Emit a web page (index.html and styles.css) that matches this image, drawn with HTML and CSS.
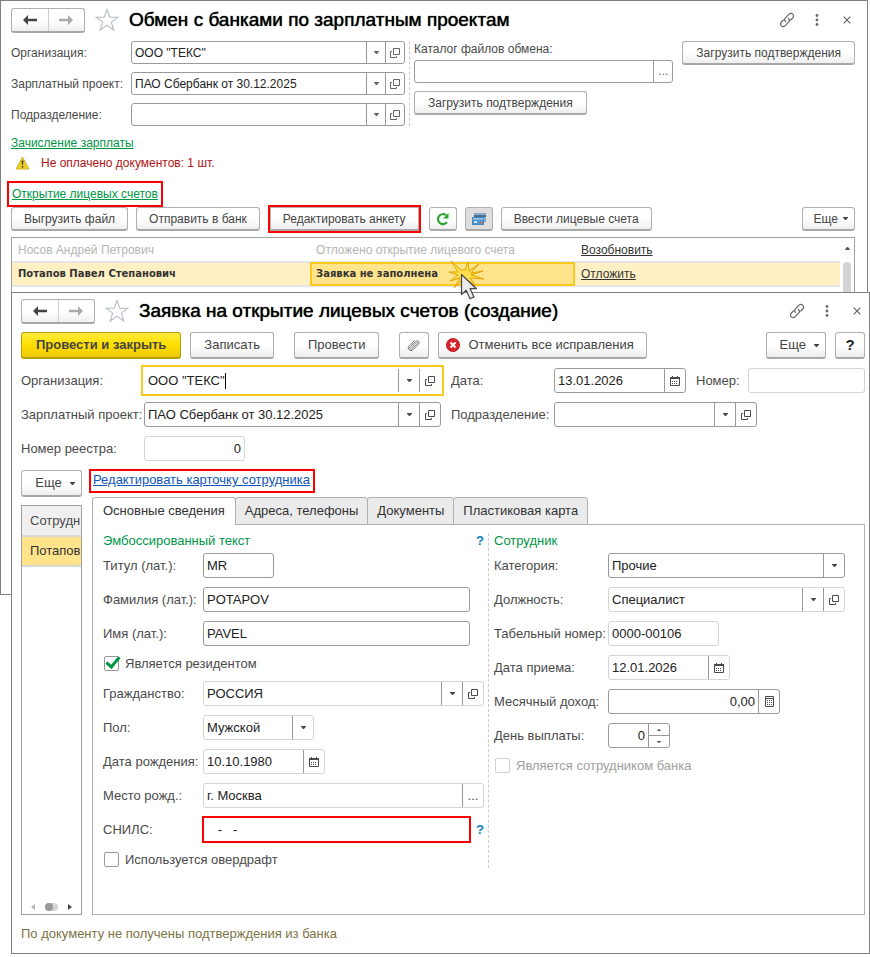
FILE: index.html
```html
<!DOCTYPE html>
<html lang="ru">
<head>
    <meta charset="UTF-8">
    <meta name="viewport" content="width=device-width, initial-scale=1.0">
    <title>Обмен с банками по зарплатным проектам</title>
    <link rel="stylesheet" href="styles.css">
</head>
<body>
    <!-- Общие иконки -->
    <svg class="sprite" width="0" height="0" aria-hidden="true">
        <symbol id="i-back" viewBox="0 0 14 10"><path d="M0 5l5-5v3.800h9v2.400H5V10z" fill="currentColor"/></symbol>
        <symbol id="i-next" viewBox="0 0 14 10"><path d="M14 5L9 0v3.800H0v2.400h9V10z" fill="currentColor"/></symbol>
        <symbol id="i-star" viewBox="0 0 24 24"><path d="M12 1.500l2.700 7.700h8.200l-6.600 4.900 2.500 7.900-6.800-4.900-6.800 4.900 2.500-7.900L1.100 9.200h8.200z" fill="#fff" stroke="#b4bcc4" stroke-width="1.100"/></symbol>
        <symbol id="i-link" viewBox="0 0 16 16"><g fill="none" stroke="#666" stroke-width="1.200" stroke-linecap="round"><path d="M6.500 9.500C5.300 8.200 5.500 6.800 6.500 5.800l3.300-3.500c1.200-1.200 2.800-1.200 3.900-.2s1.100 2.700 0 3.900l-2 2"/><path d="M9.500 6.500c1.200 1.300 1 2.700 0 3.700l-3.300 3.500c-1.200 1.200-2.800 1.200-3.900.2s-1.100-2.700 0-3.900l2-2"/></g></symbol>
        <symbol id="i-dots" viewBox="0 0 4 12"><g fill="#6a6a6a"><circle cx="2" cy="1.500" r="1.400"/><circle cx="2" cy="6" r="1.400"/><circle cx="2" cy="10.500" r="1.400"/></g></symbol>
        <symbol id="i-close" viewBox="0 0 8 8"><path d="M.7.7l6.600 6.600M7.300.7L.7 7.300" stroke="#666" stroke-width="1.200"/></symbol>
        <symbol id="i-down" viewBox="0 0 5 3"><path d="M0 0h5v.5L3 3H2L0 .5z" fill="currentColor"/></symbol>
        <symbol id="i-up" viewBox="0 0 5 3"><path d="M0 3h5v-.5L3 0H2L0 2.500z" fill="currentColor"/></symbol>
        <symbol id="i-open" viewBox="0 0 10 10"><path d="M3.500.5h6v6h-6zM2 3.500H.5v6h6V8" fill="none" stroke="currentColor"/></symbol>
        <symbol id="i-calendar" viewBox="0 0 10 10"><path d="M.5 1.500h9v8h-9z" fill="#fff" stroke="#4a4a4a"/><path d="M0 1h10v2H0zM2 0h1v1H2zM7 0h1v1H7z" fill="#4a4a4a"/><path d="M2 5.500h6M2 7.500h6" stroke="#4a4a4a" stroke-dasharray="1 1"/></symbol>
        <symbol id="i-calc" viewBox="0 0 9 11"><path d="M.5.5h8v10h-8zM1 2.500h7" fill="none" stroke="#4a4a4a"/><path d="M2 4.500h5M2 6.500h5M2 8.500h5" stroke="#4a4a4a" stroke-dasharray="1 1"/></symbol>
    </svg>

    <div class="desktop">
        <!-- Окно обмена с банками -->
        <main class="window window-main">
            <header class="titlebar">
                <div class="nav">
                    <button type="button" aria-label="Назад"><svg width="14" height="10"><use href="#i-back"/></svg></button>
                    <button type="button" class="next" aria-label="Вперед"><svg width="14" height="10"><use href="#i-next"/></svg></button>
                </div>
                <svg class="star" width="24" height="24"><use href="#i-star"/></svg>
                <h1>Обмен с банками по зарплатным проектам</h1>
                <div class="window-tools">
                    <button type="button" aria-label="Ссылка"><svg width="16" height="16"><use href="#i-link"/></svg></button>
                    <button type="button" aria-label="Меню"><svg width="4" height="12"><use href="#i-dots"/></svg></button>
                    <button type="button" aria-label="Закрыть"><svg width="8" height="8"><use href="#i-close"/></svg></button>
                </div>
            </header>

            <section class="params">
                <div class="params-left">
                    <div class="row">
                        <label for="org">Организация:</label>
                        <div class="field">
                            <input id="org" type="text" value='ООО "ТЕКС"'>
                            <button type="button" aria-label="Выбрать"><svg width="5" height="3"><use href="#i-down"/></svg></button>
                            <button type="button" aria-label="Открыть"><svg width="10" height="10"><use href="#i-open"/></svg></button>
                        </div>
                    </div>
                    <div class="row">
                        <label for="project">Зарплатный проект:</label>
                        <div class="field">
                            <input id="project" type="text" value="ПАО Сбербанк от 30.12.2025">
                            <button type="button" aria-label="Выбрать"><svg width="5" height="3"><use href="#i-down"/></svg></button>
                            <button type="button" aria-label="Открыть"><svg width="10" height="10"><use href="#i-open"/></svg></button>
                        </div>
                    </div>
                    <div class="row">
                        <label for="dept">Подразделение:</label>
                        <div class="field">
                            <input id="dept" type="text">
                            <button type="button" aria-label="Выбрать"><svg width="5" height="3"><use href="#i-down"/></svg></button>
                            <button type="button" aria-label="Открыть"><svg width="10" height="10"><use href="#i-open"/></svg></button>
                        </div>
                    </div>
                </div>
                <div class="params-middle">
                    <label for="catalog">Каталог файлов обмена:</label>
                    <div class="field">
                        <input id="catalog" type="text">
                        <button type="button" class="ellipsis" aria-label="Обзор">...</button>
                    </div>
                    <button type="button" class="btn">Загрузить подтверждения</button>
                </div>
                <button type="button" class="btn">Загрузить подтверждения</button>
            </section>

            <section class="tasks">
                <a href="#" class="link-green">Зачисление зарплаты</a>
                <p class="warning">
                    <svg width="15" height="14" viewBox="0 0 15 14"><path d="M7.500 1L14 13H1z" fill="#ecd02c" stroke="#d3b52a" stroke-linejoin="round"/><path d="M6.500 4.500h2L8 9H7zM6.700 10h1.600v1.600H6.700z" fill="#4a3d00"/></svg>
                    Не оплачено документов: 1 шт.
                </p>
                <div class="marked marked-accounts"><a href="#" class="link-green">Открытие лицевых счетов</a></div>
            </section>

            <div class="toolbar">
                <button type="button" class="btn">Выгрузить файл</button>
                <button type="button" class="btn">Отправить в банк</button>
                <button type="button" class="btn btn-marked">Редактировать анкету</button>
                <button type="button" class="btn btn-icon" aria-label="Обновить">
                    <svg width="14" height="14" viewBox="0 0 14 14"><path d="M11 10.200A5 5 0 1 1 10 3.200" fill="none" stroke="#2ba52e" stroke-width="2.200"/><path d="M12.500 1v5.500H7z" fill="#2ba52e"/></svg>
                </button>
                <button type="button" class="btn btn-icon pressed" aria-label="Карты">
                    <svg width="16" height="14" viewBox="0 0 16 14"><path d="M3.500 1.500h11v8h-11z" fill="#8db4d6" stroke="#7ba3c7"/><path d="M3 3h12v2H3z" fill="#4f6c88"/><path d="M1.500 5.500h11v7h-11z" fill="#4b97d2" stroke="#3f85bd"/><path d="M2 6h10v1.500H2z" fill="#9fcbee"/><path d="M3 9h3v2H3z" fill="#d9e6f0"/><path d="M9 10h3v1.500H9z" fill="#d9694a"/></svg>
                </button>
                <button type="button" class="btn">Ввести лицевые счета</button>
                <button type="button" class="btn more">Еще <svg width="5" height="3"><use href="#i-down"/></svg></button>
            </div>

            <div class="list">
                <table>
                    <tbody>
                        <tr class="muted">
                            <td class="col-name">Носов Андрей Петрович</td>
                            <td class="col-status">Отложено открытие лицевого счета</td>
                            <td><a href="#">Возобновить</a></td>
                        </tr>
                        <tr class="selected">
                            <td class="col-name">Потапов Павел Степанович</td>
                            <td class="col-status current">Заявка не заполнена</td>
                            <td><a href="#">Отложить</a></td>
                        </tr>
                    </tbody>
                </table>
                <div class="scrollbar">
                    <svg width="5" height="3"><use href="#i-up"/></svg>
                    <div class="thumb"></div>
                </div>
            </div>
        </main>

        <!-- Окно заявки -->
        <section class="window window-doc">
            <header class="titlebar">
                <div class="nav">
                    <button type="button" aria-label="Назад"><svg width="14" height="10"><use href="#i-back"/></svg></button>
                    <button type="button" class="next" aria-label="Вперед"><svg width="14" height="10"><use href="#i-next"/></svg></button>
                </div>
                <svg class="star" width="24" height="24"><use href="#i-star"/></svg>
                <h1>Заявка на открытие лицевых счетов (создание)</h1>
                <div class="window-tools">
                    <button type="button" aria-label="Ссылка"><svg width="16" height="16"><use href="#i-link"/></svg></button>
                    <button type="button" aria-label="Меню"><svg width="4" height="12"><use href="#i-dots"/></svg></button>
                    <button type="button" aria-label="Закрыть"><svg width="8" height="8"><use href="#i-close"/></svg></button>
                </div>
            </header>

            <div class="commands">
                <button type="button" class="btn btn-primary">Провести и закрыть</button>
                <button type="button" class="btn">Записать</button>
                <button type="button" class="btn spaced">Провести</button>
                <button type="button" class="btn btn-icon spaced" aria-label="Файлы">
                    <svg width="14" height="14" viewBox="0 0 14 14"><path d="M4.500 9.200L9.300 4.400c.9-.9 2 .2 1.100 1.100L5.300 10.600c-1.500 1.500-3.500-.5-2-2L8.500 3.400c2.200-2.200 5.200.7 3 2.900l-5.200 5.200c-3 3-7-1-4-4L7.500 2.300" fill="none" stroke="#777" stroke-linecap="round"/></svg>
                </button>
                <button type="button" class="btn btn-cancel">
                    <svg width="14" height="14" viewBox="0 0 14 14"><circle cx="7" cy="7" r="6.600" fill="#d9232a" stroke="#b5161c" stroke-width=".8"/><path d="M4.500 4.500l5 5M9.500 4.500l-5 5" stroke="#fff" stroke-width="2"/></svg>
                    Отменить все исправления
                </button>
                <button type="button" class="btn more">Еще <svg width="5" height="3"><use href="#i-down"/></svg></button>
                <button type="button" class="btn btn-icon help">?</button>
            </div>

            <div class="head-form">
                <label for="doc-org">Организация:</label>
                <div class="field focused">
                    <span class="typed"><input id="doc-org" type="text" value='ООО "ТЕКС"'><i class="caret"></i></span>
                    <button type="button" aria-label="Выбрать"><svg width="5" height="3"><use href="#i-down"/></svg></button>
                    <button type="button" aria-label="Открыть"><svg width="10" height="10"><use href="#i-open"/></svg></button>
                </div>
                <label for="doc-date">Дата:</label>
                <div class="date-number">
                    <div class="field w-date-wide">
                        <input id="doc-date" type="text" value="13.01.2026">
                        <button type="button" aria-label="Календарь"><svg width="10" height="10"><use href="#i-calendar"/></svg></button>
                    </div>
                    <label for="doc-number">Номер:</label>
                    <div class="field light"><input id="doc-number" type="text" readonly></div>
                </div>

                <label for="doc-project">Зарплатный проект:</label>
                <div class="field">
                    <input id="doc-project" type="text" value="ПАО Сбербанк от 30.12.2025">
                    <button type="button" aria-label="Выбрать"><svg width="5" height="3"><use href="#i-down"/></svg></button>
                    <button type="button" aria-label="Открыть"><svg width="10" height="10"><use href="#i-open"/></svg></button>
                </div>
                <label for="doc-dept">Подразделение:</label>
                <div class="field w-dept">
                    <input id="doc-dept" type="text">
                    <button type="button" aria-label="Выбрать"><svg width="5" height="3"><use href="#i-down"/></svg></button>
                    <button type="button" aria-label="Открыть"><svg width="10" height="10"><use href="#i-open"/></svg></button>
                </div>

                <label for="doc-registry">Номер реестра:</label>
                <div class="field light w-registry"><input id="doc-registry" class="num" type="text" value="0" readonly></div>
            </div>

            <div class="body">
                <aside class="staff">
                    <button type="button" class="btn more">Еще <svg width="5" height="3"><use href="#i-down"/></svg></button>
                    <div class="staff-list">
                        <table>
                            <thead><tr><th>Сотрудн</th></tr></thead>
                            <tbody><tr><td>Потапов</td></tr></tbody>
                        </table>
                        <div class="hscroll">
                            <svg width="4" height="6" viewBox="0 0 4 6"><path d="M4 0v6L0 3z" fill="#b5b5b5"/></svg>
                            <span class="track"><span class="knob"></span></span>
                            <svg width="4" height="6" viewBox="0 0 4 6"><path d="M0 0v6l4-3z" fill="#444"/></svg>
                        </div>
                    </div>
                </aside>

                <div class="card">
                    <div class="marked marked-card"><a href="#" class="link-blue">Редактировать карточку сотрудника</a></div>
                    <div class="tabs" role="tablist">
                        <button type="button" role="tab" class="active" aria-selected="true">Основные сведения</button>
                        <button type="button" role="tab">Адреса, телефоны</button>
                        <button type="button" role="tab">Документы</button>
                        <button type="button" role="tab">Пластиковая карта</button>
                    </div>
                    <div class="panel">
                        <div class="col col-left">
                            <h2>Эмбоссированный текст <a href="#" class="hint">?</a></h2>
                            <div class="row">
                                <label for="title">Титул (лат.):</label>
                                <div class="field w-title"><input id="title" type="text" value="MR"></div>
                            </div>
                            <div class="row">
                                <label for="surname">Фамилия (лат.):</label>
                                <div class="field short"><input id="surname" type="text" value="POTAPOV"></div>
                            </div>
                            <div class="row">
                                <label for="name">Имя (лат.):</label>
                                <div class="field short"><input id="name" type="text" value="PAVEL"></div>
                            </div>
                            <label class="check"><input type="checkbox" checked>Является резидентом</label>
                            <div class="row">
                                <label for="citizen">Гражданство:</label>
                                <div class="field light">
                                    <input id="citizen" type="text" value="РОССИЯ">
                                    <button type="button" aria-label="Выбрать"><svg width="5" height="3"><use href="#i-down"/></svg></button>
                                    <button type="button" aria-label="Открыть"><svg width="10" height="10"><use href="#i-open"/></svg></button>
                                </div>
                            </div>
                            <div class="row">
                                <label for="sex">Пол:</label>
                                <div class="field light w-small">
                                    <select id="sex"><option>Мужской</option><option>Женский</option></select>
                                    <span class="arrow"><svg width="5" height="3"><use href="#i-down"/></svg></span>
                                </div>
                            </div>
                            <div class="row">
                                <label for="birth">Дата рождения:</label>
                                <div class="field light w-date">
                                    <input id="birth" type="text" value="10.10.1980">
                                    <button type="button" aria-label="Календарь"><svg width="10" height="10"><use href="#i-calendar"/></svg></button>
                                </div>
                            </div>
                            <div class="row">
                                <label for="place">Место рожд.:</label>
                                <div class="field light">
                                    <input id="place" type="text" value="г. Москва">
                                    <button type="button" class="ellipsis" aria-label="Изменить">...</button>
                                </div>
                            </div>
                            <div class="row">
                                <label for="snils">СНИЛС:</label>
                                <div class="field short snils"><input id="snils" type="text" value="   -   -"></div>
                                <a href="#" class="hint">?</a>
                            </div>
                            <label class="check"><input type="checkbox">Используется овердрафт</label>
                        </div>

                        <div class="col col-right">
                            <h2>Сотрудник</h2>
                            <div class="row">
                                <label for="category">Категория:</label>
                                <div class="field">
                                    <select id="category"><option>Прочие</option></select>
                                    <span class="arrow"><svg width="5" height="3"><use href="#i-down"/></svg></span>
                                </div>
                            </div>
                            <div class="row">
                                <label for="position">Должность:</label>
                                <div class="field light">
                                    <input id="position" type="text" value="Специалист">
                                    <button type="button" aria-label="Выбрать"><svg width="5" height="3"><use href="#i-down"/></svg></button>
                                    <button type="button" aria-label="Открыть"><svg width="10" height="10"><use href="#i-open"/></svg></button>
                                </div>
                            </div>
                            <div class="row">
                                <label for="tabnum">Табельный номер:</label>
                                <div class="field light w-small"><input id="tabnum" type="text" value="0000-00106"></div>
                            </div>
                            <div class="row">
                                <label for="hired">Дата приема:</label>
                                <div class="field light w-date">
                                    <input id="hired" type="text" value="12.01.2026">
                                    <button type="button" aria-label="Календарь"><svg width="10" height="10"><use href="#i-calendar"/></svg></button>
                                </div>
                            </div>
                            <div class="row">
                                <label for="income">Месячный доход:</label>
                                <div class="field w-income">
                                    <input id="income" class="num" type="text" value="0,00">
                                    <button type="button" aria-label="Калькулятор"><svg width="9" height="11"><use href="#i-calc"/></svg></button>
                                </div>
                            </div>
                            <div class="row">
                                <label for="payday">День выплаты:</label>
                                <div class="field w-payday">
                                    <input id="payday" class="num" type="text" value="0">
                                    <span class="spin">
                                        <button type="button" aria-label="Больше"><svg width="4" height="2"><use href="#i-up"/></svg></button>
                                        <button type="button" aria-label="Меньше"><svg width="4" height="2"><use href="#i-down"/></svg></button>
                                    </span>
                                </div>
                            </div>
                            <label class="check disabled"><input type="checkbox" disabled>Является сотрудником банка</label>
                        </div>
                    </div>
                </div>
            </div>

            <footer class="status">По документу не получены подтверждения из банка</footer>
        </section>

        <!-- Указатель мыши со вспышкой щелчка -->
        <svg class="pointer" width="36" height="42" viewBox="0 0 36 42" aria-hidden="true">
            <path d="M12 10L2 1l7 11L0 12l9 3-8 6 10-3-6 10 8-8 3 7 2-7 9 6-6-8 14 1-13-4 12-4-12 2 8-9-10 7-1-9-3 8z" fill="#ffdf4d" stroke="#e3a400"/>
            <path d="M12.500 14.500v20l4.700-4.300 3.800 8.500 4-1.800-3.900-8.200h6.300z" fill="#ececec" stroke="#444" stroke-width="1.200" stroke-linejoin="round"/>
        </svg>
    </div>
</body>
</html>
```
FILE: styles.css
```css
* {
    box-sizing: border-box;
}

body {
    margin: 0;
    background: #ffffff;
    color: #4a4a4a;
    font-family: "Liberation Sans", Arial, sans-serif;
    font-size: 13px;
    line-height: 16px;
}

button,
input,
select {
    margin: 0;
    font: inherit;
    color: inherit;
}

a {
    color: inherit;
}

svg {
    flex: none;
}

.sprite {
    position: absolute;
}

/* Окна лежат друг на друге в одной ячейке */
.desktop {
    position: relative;
    display: grid;
}

.window {
    grid-area: 1 / 1;
    min-width: 0;
    background: #ffffff;
    border: 1px solid #808080;
}

.window-main {
    align-self: start;
    margin-right: 2px;
    padding: 6px 12px 8px 10px;
    font-size: 12px;
}

.window-doc {
    margin: 292px 0 0 11px;
    padding: 5px 4px 11px 9px;
}

/* Заголовок окна */
.titlebar {
    display: flex;
    align-items: center;
    height: 26px;
}

.nav {
    display: flex;
    width: 74px;
    height: 25px;
    border: 1px solid #b0b0b0;
    border-bottom: 2px solid #a8a8a8;
    border-radius: 3px;
    background: linear-gradient(#ffffff 50%, #efefef);
}

.nav button {
    display: flex;
    flex: 1;
    align-items: center;
    justify-content: center;
    padding: 0;
    border: 0;
    background: none;
    color: #444444;
}

.nav .next {
    border-left: 1px solid #d0d0d0;
    color: #aaaaaa;
}

.star {
    margin: 0 10px;
}

h1 {
    flex: 1;
    margin: 0;
    color: #000000;
    font-size: 19px;
    font-weight: normal;
    line-height: 24px;
    white-space: nowrap;
    text-shadow: 0 0 1px #000000;
}

.window-tools {
    display: flex;
    align-items: center;
    gap: 14px;
}

.window-tools button {
    display: flex;
    justify-content: center;
    width: 16px;
    padding: 0;
    border: 0;
    background: none;
}

/* Кнопки */
.btn {
    display: inline-flex;
    align-items: center;
    justify-content: center;
    gap: 6px;
    height: 24px;
    padding: 0 12px;
    border: 1px solid #b0b0b0;
    border-bottom: 2px solid #a8a8a8;
    border-radius: 3px;
    background: linear-gradient(#ffffff 50%, #eeeeee);
    color: #444444;
    white-space: nowrap;
}

.btn-icon {
    width: 28px;
    padding: 0;
}

.btn-marked {
    margin: 0 2px;
    border-radius: 0;
    outline: 2px solid #ff0000;
}

.pressed {
    background: #dedede;
}

.more {
    margin-left: auto;
    padding: 0 6px 0 12px;
}

/* Поля ввода */
.field {
    display: flex;
    flex: 1;
    min-width: 0;
    height: 25px;
    border: 1px solid #999999;
    border-radius: 3px;
    background: #ffffff;
}

.field.light {
    border-color: #d4d4d4;
}

.field input,
.field select {
    flex: 1;
    width: 100%;
    min-width: 0;
    padding: 0 3px;
    border: 0;
    outline: 0;
    background: none;
    color: #222222;
    appearance: none;
    white-space: pre;
}

.field .num {
    text-align: right;
}

.field button,
.field .arrow {
    display: flex;
    flex: none;
    align-items: center;
    justify-content: center;
    width: 21px;
    padding: 0;
    border: 0;
    border-left: 1px solid #999999;
    background: none;
    color: #4a4a4a;
}

.field .arrow {
    margin-left: -21px;
    pointer-events: none;
}

.field .ellipsis {
    align-items: flex-end;
    padding-bottom: 3px;
}

.row {
    display: flex;
    align-items: center;
}

/* Параметры обмена */
.params {
    display: grid;
    grid-template-columns: 399px minmax(0, 1fr) auto;
    align-items: start;
    margin-top: 8px;
}

.params .field {
    height: 23px;
}

.params .field button {
    width: 19px;
    color: #666666;
}

.params .btn {
    padding: 0 13px;
}

.params-left {
    display: grid;
    gap: 8px;
    padding-right: 4px;
    border-right: 1px dashed #cccccc;
}

.params-left label {
    width: 120px;
    white-space: nowrap;
}

.params-middle {
    display: flex;
    flex-direction: column;
    gap: 8px;
    padding: 0 9px 0 4px;
}

.params-middle label {
    height: 11px;
}

.params-middle .field {
    flex: none;
}

.params-middle .btn {
    align-self: flex-start;
}

.tasks {
    margin-top: 9px;
}

.link-green {
    color: #009646;
}

.link-blue {
    color: #1155bb;
}

.warning {
    display: flex;
    align-items: center;
    gap: 11px;
    margin: 4px 0 10px 4px;
    color: #b01414;
}

.marked {
    width: fit-content;
    border: 2px solid #ff0000;
    white-space: nowrap;
}

.marked-accounts {
    margin-left: -4px;
    padding: 3px;
}

.toolbar {
    display: flex;
    gap: 8px;
}

.toolbar .more {
    gap: 5px;
    padding-left: 11px;
}

/* Список сотрудников */
.list {
    display: flex;
    min-height: 349px;
    margin-top: 6px;
    border: 1px solid #a0a0a0;
}

.list table {
    flex: 1;
    align-self: flex-start;
    border-collapse: collapse;
    table-layout: fixed;
}

.list td {
    height: 24px;
    padding: 0 6px;
    border-bottom: 2px solid #e6e6e6;
    color: #333333;
    white-space: nowrap;
}

.list .col-name {
    width: 36%;
}

.list .col-status {
    width: 32%;
}

.muted td.col-name,
.muted td.col-status {
    color: #b4b4b4;
}

.selected td {
    background: #fff0c4;
}

.selected td.col-name,
.selected td.current {
    font-family: "DejaVu Sans", Verdana, sans-serif;
    font-size: 10px;
    font-weight: bold;
}

.selected td.current {
    background: #ffe48c;
    outline: 2px solid #fac81e;
    outline-offset: -2px;
}

.scrollbar {
    display: flex;
    flex-direction: column;
    align-items: center;
    gap: 12px;
    width: 14px;
    padding-top: 9px;
    color: #555555;
}

.thumb {
    flex: 1;
    width: 8px;
    border-radius: 4px;
    background: #d4d4d4;
}

/* Команды документа */
.commands {
    display: flex;
    gap: 9px;
    margin-top: 8px;
}

.commands .btn,
.staff .btn {
    height: 27px;
    padding: 0 13px;
}

.commands .btn-icon {
    width: 30px;
    padding: 0;
}

.commands .spaced {
    margin-left: 11px;
}

.commands .btn-primary {
    padding: 0 14px;
    border-color: #b8a000;
    background: linear-gradient(#ffea3c, #ffdf00 50%, #ecca00);
    font-weight: bold;
}

.commands .btn-cancel {
    gap: 8px;
    padding: 0 12px 0 7px;
}

.commands .more,
.staff .more {
    gap: 8px;
    padding: 0 6px 0 13px;
}

.commands .help {
    color: #222222;
    font-size: 15px;
    font-weight: bold;
}

/* Шапка документа */
.head-form {
    display: grid;
    grid-template-columns: 123px minmax(0, 297fr) 113px minmax(0, 311fr);
    row-gap: 9px;
    align-items: center;
    margin-top: 9px;
}

.head-form > label {
    white-space: nowrap;
}

.head-form > label:nth-of-type(even) {
    padding-left: 10px;
}

.focused {
    border-color: transparent;
    border-radius: 0;
    outline: 2px solid #fac81e;
    outline-offset: 1px;
}

.typed {
    display: flex;
    flex: 1;
    align-items: center;
    min-width: 0;
}

.typed input {
    flex: none;
    width: auto;
    padding-right: 0;
    field-sizing: content;
}

.caret {
    width: 1px;
    height: 16px;
    background: #000000;
}

.date-number {
    display: flex;
    align-items: center;
    gap: 8px;
}

.date-number label {
    margin-left: 2px;
}

.date-number .w-date-wide {
    flex: none;
    width: 132px;
}

.w-dept {
    width: 203px;
}

.w-registry {
    width: 101px;
}

/* Сотрудники и карточка */
.body {
    display: grid;
    grid-template-columns: 61px minmax(0, 1fr);
    column-gap: 10px;
    margin-top: 8px;
}

.staff {
    display: flex;
    flex-direction: column;
    gap: 8px;
    padding-top: 1px;
}

.staff .more {
    margin: 0;
}

.staff-list {
    display: flex;
    flex: 1;
    flex-direction: column;
    justify-content: space-between;
    border: 1px solid #a0a0a0;
}

.staff-list table {
    border-collapse: collapse;
}

.staff-list th,
.staff-list td {
    height: 30px;
    padding: 0 0 0 8px;
    border-bottom: 2px solid #d8d8d8;
    background: #f0f0f0;
    font-weight: normal;
    text-align: left;
    white-space: nowrap;
}

.staff-list td {
    background: #ffe48c;
    color: #333333;
}

.hscroll {
    display: flex;
    align-items: center;
    justify-content: space-between;
    padding: 0 9px 3px;
}

.track {
    width: 13px;
    height: 8px;
    border-radius: 4px;
    background: #d4d4d4;
}

.knob {
    display: block;
    width: 8px;
    height: 8px;
    border-radius: 50%;
    background: #999999;
}

.card {
    display: flex;
    flex-direction: column;
}

.marked-card {
    margin-left: -3px;
    padding: 1px 3px 3px 2px;
}

.tabs {
    position: relative;
    z-index: 1;
    display: flex;
    margin-top: 4px;
}

.tabs button {
    height: 28px;
    margin-right: -1px;
    padding: 0 9px;
    border: 1px solid #b0b0b0;
    border-radius: 3px 3px 0 0;
    background: #ebebeb;
    color: #333333;
    white-space: nowrap;
}

.tabs .active {
    padding: 0 10px;
    border-bottom-color: #ffffff;
    background: #ffffff;
}

.panel {
    display: grid;
    grid-template-columns: 396px minmax(0, 1fr);
    align-items: start;
    margin-top: -1px;
    padding: 8px 19px 46px 0;
    border: 1px solid #b0b0b0;
}

.col {
    display: grid;
    gap: 9px;
}

.col-left {
    padding: 0 4px 0 10px;
    border-right: 1px dashed #cccccc;
}

.col-right {
    padding-left: 5px;
}

h2 {
    display: flex;
    justify-content: space-between;
    height: 11px;
    margin: 0;
    color: #009646;
    font-size: 13px;
    font-weight: normal;
    line-height: 16px;
}

.col-left .row label {
    width: 100px;
    white-space: nowrap;
}

.col-right .row label {
    width: 114px;
    white-space: nowrap;
}

.hint {
    width: 8px;
    margin-left: 6px;
    color: #0a7cc8;
    font-weight: bold;
    text-decoration: none;
}

.col .short {
    flex: none;
    width: 267px;
}

.col .w-title {
    flex: none;
    width: 71px;
}

.col .w-small {
    flex: none;
    width: 111px;
}

.col .w-date {
    flex: none;
    width: 122px;
}

.col .w-income {
    flex: none;
    width: 172px;
}

.col .w-payday {
    flex: none;
    width: 62px;
}

.snils {
    border-color: #ff0000;
    border-radius: 0;
    outline: 1px solid #ff0000;
}

.spin {
    display: flex;
    flex-direction: column;
    width: 21px;
    border-left: 1px solid #999999;
}

.field .spin button {
    flex: 1;
    width: 100%;
    border-left: 0;
}

.field .spin button + button {
    border-top: 1px solid #999999;
}

.check {
    display: flex;
    align-items: center;
    gap: 6px;
    height: 17px;
}

.check input {
    display: grid;
    place-items: center;
    width: 15px;
    height: 15px;
    margin-left: 1px;
    border: 1px solid #999999;
    border-radius: 2px;
    background: #ffffff;
    appearance: none;
}

.check input:checked::before {
    content: "";
    width: 5px;
    height: 11px;
    margin: -6px 0 0 3px;
    border: solid #009646;
    border-width: 0 3px 3px 0;
    transform: rotate(40deg);
}

.check.disabled {
    color: #a0a0a0;
}

.check.disabled input {
    border-color: #d0d0d0;
}

.status {
    margin-top: 11px;
    color: #7b7345;
}

.pointer {
    position: absolute;
    top: 260px;
    left: 449px;
}
```
